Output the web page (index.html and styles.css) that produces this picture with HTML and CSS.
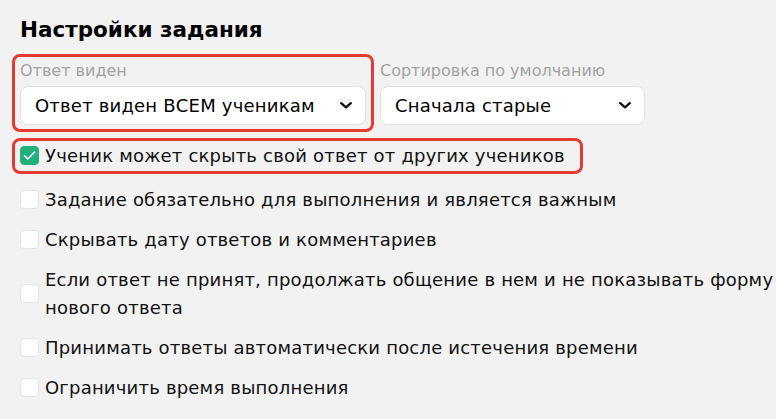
FILE: index.html
```html
<!DOCTYPE html>
<html lang="ru">
<head>
<meta charset="UTF-8" />
<meta name="viewport" content="width=device-width, initial-scale=1" />
<title>Настройки задания</title>
<link rel="stylesheet" href="styles.css">
</head>
<body>
  <section class="settings">
    <h2>Настройки задания</h2>

    <div class="fields">
      <div class="field highlight">
        <label class="field-label">Ответ виден</label>
        <div class="select select-visibility">
          <span>Ответ виден ВСЕМ ученикам</span>
          <svg class="chevron" width="12" height="7" viewBox="0 0 12 7"><polyline points="1.2,1.2 6,5.4 10.8,1.2" /></svg>
        </div>
      </div>
      <div class="field">
        <label class="field-label">Сортировка по умолчанию</label>
        <div class="select select-sort">
          <span>Сначала старые</span>
          <svg class="chevron" width="12" height="7" viewBox="0 0 12 7"><polyline points="1.2,1.2 6,5.4 10.8,1.2" /></svg>
        </div>
      </div>
    </div>

    <ul class="options">
      <li class="option highlight">
        <span class="checkbox checked">
          <svg width="13" height="11" viewBox="0 0 13 11"><polyline points="1.5,5.8 4.8,9 11.5,2" /></svg>
        </span>
        <span class="option-text">Ученик может скрыть свой ответ от других учеников</span>
      </li>
      <li class="option">
        <span class="checkbox"></span>
        <span class="option-text">Задание обязательно для выполнения и является важным</span>
      </li>
      <li class="option">
        <span class="checkbox"></span>
        <span class="option-text">Скрывать дату ответов и комментариев</span>
      </li>
      <li class="option">
        <span class="checkbox"></span>
        <span class="option-text">Если ответ не принят, продолжать общение в нем и не показывать форму нового ответа</span>
      </li>
      <li class="option">
        <span class="checkbox"></span>
        <span class="option-text">Принимать ответы автоматически после истечения времени</span>
      </li>
      <li class="option">
        <span class="checkbox"></span>
        <span class="option-text">Ограничить время выполнения</span>
      </li>
    </ul>
  </section>
</body>
</html>
```

FILE: styles.css
```css
* {
  box-sizing: border-box;
}
html, body {
  margin: 0;
  padding: 0;
  background-color: #f2f2f2;
  font-family: "DejaVu Sans", "Noto Sans", sans-serif;
  color: #111;
  overflow: hidden;
}

.settings {
  padding-left: 20px;
}

h2 {
  margin: 16px 0 0;
  font-size: 21.5px;
  line-height: 28px;
  font-weight: bold;
  color: #000;
}

/* select fields */
.fields {
  display: flex;
  gap: 14px;
  margin-top: 17px;
}

.field {
  display: flex;
  flex-direction: column;
}

.field-label {
  font-size: 16px;
  line-height: 20px;
  color: #a3a3a3;
  margin-bottom: 5px;
}

.select {
  height: 39px;
  display: flex;
  align-items: center;
  justify-content: space-between;
  padding: 0 13px 0 14px;
  background-color: #fff;
  border: 1px solid #e2e2e2;
  border-radius: 8px;
  font-size: 18px;
  letter-spacing: 0.2px;
  color: #000;
}
.select-visibility {
  width: 346px;
}
.select-sort {
  width: 265px;
}

.chevron {
  fill: none;
  stroke: #111;
  stroke-width: 2.3;
  stroke-linecap: round;
  stroke-linejoin: round;
}

/* checkbox list */
.options {
  list-style: none;
  margin: 17px 0 0;
  padding: 0;
  display: flex;
  flex-direction: column;
  gap: 12px;
}

.option {
  display: flex;
  align-items: center;
  gap: 6px;
  font-size: 18px;
  line-height: 28px;
  letter-spacing: 0.2px;
}

.option-text {
  flex: 1;
}

.checkbox {
  flex: none;
  width: 19px;
  height: 19px;
  margin-bottom: 2px;
  display: flex;
  align-items: center;
  justify-content: center;
  background-color: #fff;
  border: 1px solid #e4e4e4;
  border-radius: 4px;
}
.checkbox.checked {
  background-color: #1fb07c;
  border-color: #1fb07c;
}
.checkbox svg {
  fill: none;
  stroke: #fff;
  stroke-width: 1.6;
  stroke-linecap: round;
  stroke-linejoin: round;
}

/* red frame drawn round the settings under discussion */
.highlight {
  position: relative;
}
.highlight::after {
  content: "";
  position: absolute;
  border: 3px solid #e63b34;
  border-radius: 8px;
  pointer-events: none;
}
.field.highlight::after {
  top: -7px;
  bottom: -7px;
  left: -8px;
  right: -8px;
}
.option.highlight {
  align-self: flex-start;
  padding-right: 10px;
  margin-bottom: 4px;
}
.option.highlight::after {
  top: -4px;
  bottom: -4px;
  left: -8px;
  right: -8px;
}
```
